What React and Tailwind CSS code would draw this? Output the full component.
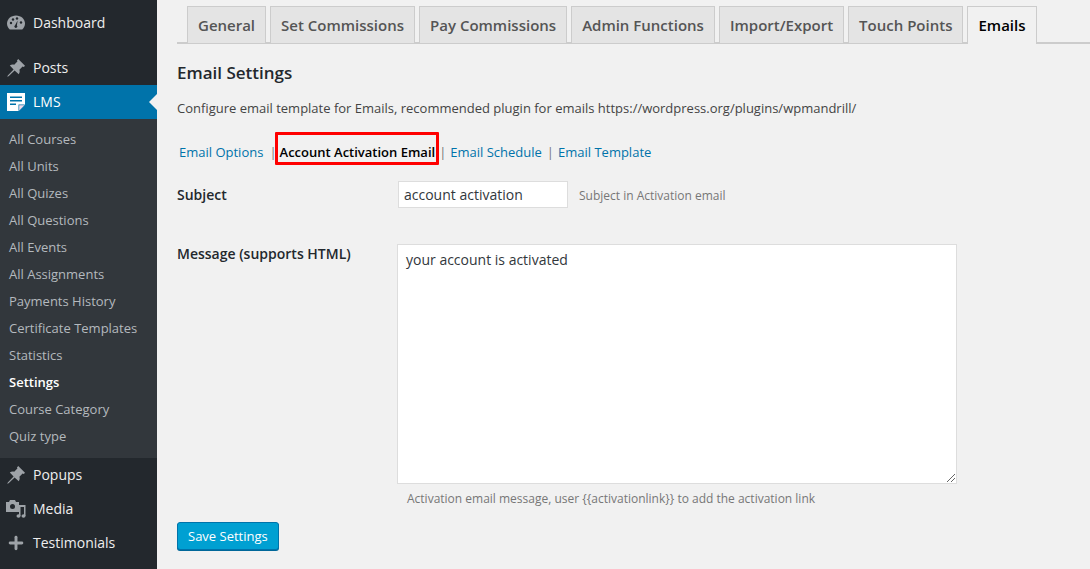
import React from "react";
import { Plus } from "lucide-react";

const font = "font-['Open_Sans',sans-serif]";

const subItems = [
  "All Courses",
  "All Units",
  "All Quizes",
  "All Questions",
  "All Events",
  "All Assignments",
  "Payments History",
  "Certificate Templates",
  "Statistics",
  "Settings",
  "Course Category",
  "Quiz type",
];

const tabs = [
  "General",
  "Set Commissions",
  "Pay Commissions",
  "Admin Functions",
  "Import/Export",
  "Touch Points",
];

const DashboardIcon = () => (
  <svg width="20" height="20" viewBox="0 0 20 20" fill="#9ea3a8">
    <path d="M3.760 16.500C2.060 15.030 1 12.900 1 10.500 1 6.080 5.030 2.500 10 2.500s9 3.580 9 8c0 2.400-1.060 4.530-2.760 6H3.760z" />
    <circle cx="5" cy="10" r="1.200" fill="#23282d" />
    <circle cx="7" cy="6.500" r="1.200" fill="#23282d" />
    <circle cx="11" cy="5.500" r="1.200" fill="#23282d" />
    <circle cx="15" cy="9.500" r="1.200" fill="#23282d" />
    <path d="M11.600 7.600 10.900 12.400a1.500 1.500 0 1 1-1.800-.2z" fill="#23282d" />
  </svg>
);

const PinIcon = () => (
  <svg width="20" height="20" viewBox="0 0 20 20" fill="#9ea3a8">
    <path d="M12.200 1 19 7.800l-1.200 1.200-1.200-.4-3.200 3.200c.6 1.600.3 3-.6 4.400L8.600 12.400l-6 5.800-1.400.6.6-1.400 5.800-6-3.800-4c1.400-.9 2.800-1.200 4.400-.6l3.200-3.200-.4-1.200z" />
  </svg>
);

const PageIcon = () => (
  <svg width="20" height="20" viewBox="0 0 20 20">
    <path d="M1 1h18v11.500L12.500 19H1z" fill="#fff" />
    <path d="M19 12.500 12.500 19v-6.500z" fill="#0073aa" />
    <path d="M13.200 13.200h5.200l-5.200 5.200z" fill="#f3d9e8" />
    <rect x="4" y="4.500" width="12" height="1.500" fill="#0073aa" />
    <rect x="4" y="8" width="12" height="1.500" fill="#0073aa" />
    <rect x="4" y="11.500" width="6" height="1.500" fill="#0073aa" />
  </svg>
);

const MediaIcon = () => (
  <svg width="20" height="20" viewBox="0 0 20 20" fill="#9ea3a8">
    <path d="M0 3h3l1-2h5l1 2h3v10H0z" />
    <circle cx="6.500" cy="7.500" r="2.500" fill="#23282d" />
    <path d="M13 6h6.500v11h-1.500V8h-3.500v9H13z" />
    <ellipse cx="17.500" cy="17" rx="2" ry="1.800" />
    <ellipse cx="12.500" cy="17" rx="2" ry="1.800" />
  </svg>
);

const MenuRow = ({ icon, label, active }) => (
  <div
    className={`relative flex h-[34px] items-center text-[14px] ${
      active ? "bg-[#0073aa] text-white" : "text-[#eeeeee]"
    }`}
  >
    <span className="flex w-[33px] justify-center pr-[2px]">{icon}</span>
    <span className="pb-[2px]">{label}</span>
    {active && (
      <span className="absolute right-0 top-[9px] h-0 w-0 border-y-[8px] border-r-[8px] border-y-transparent border-r-[#f1f1f1]" />
    )}
  </div>
);

const Sidebar = () => (
  <div className="flex w-[157px] shrink-0 flex-col bg-[#23282d] pt-[6px]">
    <MenuRow icon={<DashboardIcon />} label="Dashboard" />
    <div className="h-[11px]" />
    <MenuRow icon={<PinIcon />} label="Posts" />
    <MenuRow icon={<PageIcon />} label="LMS" active />
    <ul className="bg-[#32373c] pb-[8px] pt-[7px] text-[13px]">
      {subItems.map((item) => (
        <li
          key={item}
          className={`flex h-[27px] items-center pl-[9px] ${
            item === "Settings"
              ? "font-semibold text-white"
              : "text-[#b4b9be]"
          }`}
        >
          {item}
        </li>
      ))}
    </ul>
    <MenuRow icon={<PinIcon />} label="Popups" />
    <MenuRow icon={<MediaIcon />} label="Media" />
    <MenuRow
      icon={<Plus size={20} strokeWidth={3.5} color="#9ea3a8" />}
      label="Testimonials"
    />
  </div>
);

const Tabs = () => (
  <div className="flex h-[44px] gap-[4px] border-b-2 border-[#cccccc] pl-[10px] pt-[6px]">
    {tabs.map((tab) => (
      <div
        key={tab}
        className="flex h-[37px] items-center border border-b-0 border-[#cccccc] bg-[#e4e4e4] px-[10px] text-[15px] font-semibold text-[#555555]"
      >
        {tab}
      </div>
    ))}
    <div className="-mb-[2px] flex h-[38px] items-center border border-b-0 border-[#cccccc] bg-[#f1f1f1] px-[10px] text-[15px] font-semibold text-[#000000]">
      Emails
    </div>
  </div>
);

const SubNav = () => (
  <div className="mt-[14px] flex h-[33px] items-end pb-[4px] pl-[2px] text-[13px] leading-[18px] text-[#0073aa]">
    <span>Email Options</span>
    <span className="ml-[6px] text-[#777777]">|</span>
    <span className="-mb-[4px] -ml-[2px] flex h-[33px] items-end rounded-[1px] border-[3px] border-[#ff0000] pb-[1px] pl-[2px] pr-[1px] font-semibold text-[#000000]">
      Account Activation Email
    </span>
    <span className="text-[#777777]">|</span>
    <span className="ml-[4px]">Email Schedule</span>
    <span className="ml-[5px] text-[#777777]">|</span>
    <span className="ml-[4px]">Email Template</span>
  </div>
);

const App = () => (
  <div className={`flex h-[569px] w-[1090px] overflow-hidden bg-[#f1f1f1] ${font}`}>
    <Sidebar />
    <div className="flex-1 pl-[20px]">
      <Tabs />
      <h2 className="mt-[17px] text-[17px] font-semibold leading-[23px] text-[#23282d]">
        Email Settings
      </h2>
      <p className="mt-[14px] text-[13px] leading-[20px] text-[#444444]">
        Configure email template for Emails, recommended plugin for emails
        https://wordpress.org/plugins/wpmandrill/
      </p>
      <SubNav />
      <div className="mt-[16px] flex h-[27px] items-center">
        <label className="w-[221px] text-[14px] font-semibold text-[#23282d]">
          Subject
        </label>
        <div className="flex h-[27px] w-[170px] items-center border border-[#dddddd] bg-white pl-[5px] text-[14px] text-[#32373c]">
          account activation
        </div>
        <span className="ml-[11px] pt-[2px] text-[12px] text-[#777777]">
          Subject in Activation email
        </span>
      </div>
      <div className="mt-[36px] flex">
        <label className="w-[220px] text-[14px] font-semibold leading-[19px] text-[#23282d]">
          Message (supports HTML)
        </label>
        <div>
          <div className="relative h-[240px] w-[560px] border border-[#dddddd] bg-white px-[8px] py-[5px] text-[14px] leading-[19px] text-[#32373c]">
            your account is activated
            <svg
              className="absolute bottom-0 right-0"
              width="11"
              height="11"
              viewBox="0 0 11 11"
              stroke="#666666"
              strokeWidth="1"
            >
              <path d="M2 10 10 2M6 10l4-4" />
            </svg>
          </div>
          <p className="ml-[10px] mt-[7px] text-[12px] leading-[16px] text-[#777777]">
            {"Activation email message, user {{activationlink}} to add the activation link"}
          </p>
        </div>
      </div>
      <button className="mt-[15px] flex h-[28px] items-center rounded-[3px] border border-[#0073aa] bg-[#00a0d2] px-[10px] pt-[1px] text-[13px] text-white shadow-[0_1px_0_#006799]">
        Save Settings
      </button>
    </div>
  </div>
);

export default App;
